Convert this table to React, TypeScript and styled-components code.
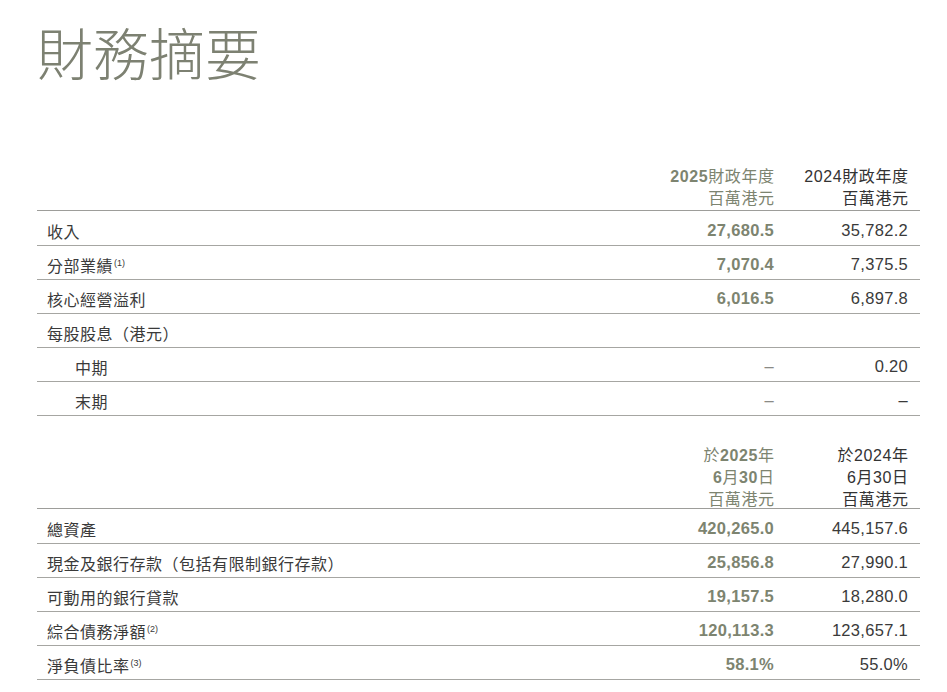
import React from "react";
import styled, { createGlobalStyle } from "styled-components";

const Global = createGlobalStyle`
  html, body { margin: 0; padding: 0; background: #ffffff; }
  body { font-family: "Liberation Sans", "Noto Sans CJK TC", sans-serif; }
`;

const Page = styled.div`
  width: 947px;
  height: 692px;
  overflow: hidden;
  padding: 0 27px 0 37px;
  box-sizing: border-box;
`;

const Title = styled.h1`
  margin: 0;
  padding-top: 16px;
  font-family: "Noto Sans CJK TC", sans-serif;
  font-weight: 300;
  font-size: 56px;
  line-height: 70px;
  color: #7d8172;
`;

const Table = styled.div`
  display: flex;
  flex-direction: column;
`;

const HeaderRow = styled.div<{ $top: number }>`
  display: grid;
  grid-template-columns: 1fr 130px 134px;
  align-items: end;
  padding: 0 12px 0 0;
  margin-top: ${(p) => p.$top}px;
  border-bottom: 1.5px solid #9d9d9a;
  font-size: 16px;
  line-height: 22px;
`;

const HeadCell = styled.div<{ $current?: boolean; $shift?: number }>`
  text-align: right;
  font-family: "Liberation Sans", "Noto Sans CJK TC", sans-serif;
  font-weight: 400;
  letter-spacing: 0.6px;
  color: ${(p) => (p.$current ? "#7d8470" : "#333333")};
  margin-bottom: ${(p) => -(p.$shift || 0)}px;
  margin-right: -0.6px;
`;

const Num = styled.b`
  font-weight: 700;
`;

const Row = styled.div<{ $first?: boolean }>`
  display: grid;
  grid-template-columns: 1fr 130px 134px;
  align-items: center;
  height: ${(p) => (p.$first ? 35 : 34)}px;
  box-sizing: border-box;
  padding: ${(p) => (p.$first ? 5 : 4)}px 12px 0 0;
  border-bottom: 1.5px solid #a6a6a2;
  font-size: 16px;
`;

const Label = styled.div<{ $indent?: boolean }>`
  padding-left: ${(p) => (p.$indent ? 38 : 10)}px;
  font-family: "Noto Sans CJK TC", sans-serif;
  font-weight: 400;
  letter-spacing: 0.5px;
  color: #3a3a3a;
  font-size: 16px;
`;

const Sup = styled.sup`
  font-family: "Liberation Sans", sans-serif;
  font-size: 9px;
  line-height: 0;
  letter-spacing: 0;
  vertical-align: 6px;
  margin-left: 1px;
`;

const Value = styled.div<{ $current?: boolean }>`
  text-align: right;
  font-family: "Liberation Sans", "Noto Sans CJK TC", sans-serif;
  font-size: 16.5px;
  font-weight: ${(p) => (p.$current ? 700 : 400)};
  color: ${(p) => (p.$current ? "#7d8470" : "#3a3a3a")};
  letter-spacing: 0.3px;
`;

const Dash = styled.span<{ $current?: boolean }>`
  color: ${(p) => (p.$current ? "#8a8a86" : "#3a3a3a")};
  font-weight: 400;
`;

type R = { label: React.ReactNode; a: React.ReactNode; b: React.ReactNode; indent?: boolean };

const DashA = <Dash $current>–</Dash>;
const DashB = <Dash>–</Dash>;

const first: R[] = [
  { label: "收入", a: "27,680.5", b: "35,782.2" },
  { label: <>分部業績<Sup>(1)</Sup></>, a: "7,070.4", b: "7,375.5" },
  { label: "核心經營溢利", a: "6,016.5", b: "6,897.8" },
  { label: "每股股息（港元）", a: "", b: "" },
  { label: "中期", a: DashA, b: "0.20", indent: true },
  { label: "末期", a: DashA, b: DashB, indent: true },
];

const second: R[] = [
  { label: "總資產", a: "420,265.0", b: "445,157.6" },
  { label: "現金及銀行存款（包括有限制銀行存款）", a: "25,856.8", b: "27,990.1" },
  { label: "可動用的銀行貸款", a: "19,157.5", b: "18,280.0" },
  { label: <>綜合債務淨額<Sup>(2)</Sup></>, a: "120,113.3", b: "123,657.1" },
  { label: <>淨負債比率<Sup>(3)</Sup></>, a: "58.1%", b: "55.0%" },
];

const Rows = ({ rows }: { rows: R[] }) => (
  <>
    {rows.map((r, i) => (
      <Row key={i} $first={i === 0}>
        <Label $indent={r.indent}>{r.label}</Label>
        <Value $current>{r.a}</Value>
        <Value>{r.b}</Value>
      </Row>
    ))}
  </>
);

export default function App() {
  return (
    <Page>
      <Global />
      <Title>財務摘要</Title>
      <Table>
        <HeaderRow $top={80}>
          <div />
          <HeadCell $current>
            <Num>2025</Num>財政年度
            <br />
            百萬港元
          </HeadCell>
          <HeadCell>
            2024財政年度
            <br />
            百萬港元
          </HeadCell>
        </HeaderRow>
        <Rows rows={first} />
        <HeaderRow $top={29}>
          <div />
          <HeadCell $current $shift={3}>
            於<Num>2025</Num>年
            <br />
            <Num>6</Num>月<Num>30</Num>日
            <br />
            百萬港元
          </HeadCell>
          <HeadCell $shift={3}>
            於2024年
            <br />
            6月30日
            <br />
            百萬港元
          </HeadCell>
        </HeaderRow>
        <Rows rows={second} />
      </Table>
    </Page>
  );
}
